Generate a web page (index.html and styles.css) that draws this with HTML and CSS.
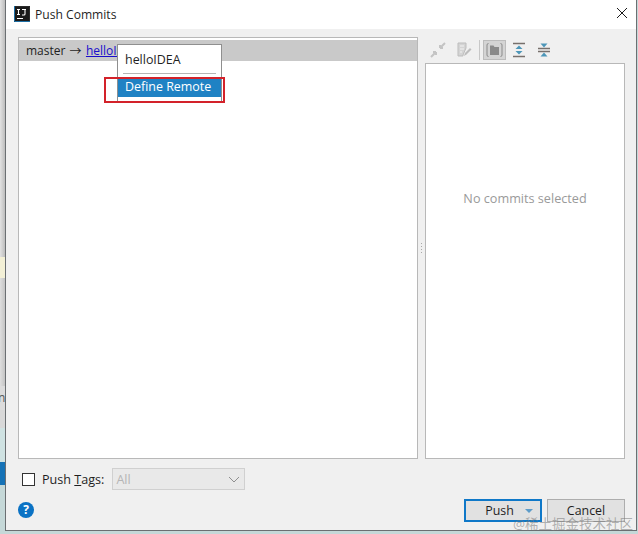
FILE: index.html
```html
<!DOCTYPE html>
<html lang="en">
<head>
<meta charset="utf-8">
<title>Push Commits</title>
<link rel="stylesheet" href="styles.css">
</head>
<body>
<div class="backdrop">
  <div class="strip">
    <div class="seg-gray-a"></div>
    <div class="seg-yellow"></div>
    <div class="seg-gray-b"></div>
    <div class="seg-word">ne</div>
    <div class="seg-gray-c"></div>
    <div class="seg-teal-a"></div>
    <div class="seg-blue"></div>
  </div>
  <div class="dialog">
    <header class="titlebar">
      <svg class="logo" width="16" height="16" viewBox="0 0 16 16"><rect width="16" height="16" fill="#1a1a1a"/><path d="M0 .5h15.500V16" fill="none" stroke="#2b2b2b"/><path d="M.5 0v15.500H16" fill="none" stroke="#1d6fa5"/><path d="M3 3.500h3M4.500 3.500v5M3 8.500h3M8 3.500h4M11 3.500v4.500q0 1-1 1H8" fill="none" stroke="#fff" stroke-width="1.100"/><rect x="3" y="12" width="6" height="1" fill="#fff"/></svg>
      <span class="title">Push Commits</span>
      <svg class="close" width="12" height="12" viewBox="0 0 12 12"><path d="M1 1l10 10M11 1L1 11" stroke="#1a1a1a" stroke-width="1" fill="none"/></svg>
    </header>
    <div class="content">
      <div class="panes">
        <section class="left">
          <div class="branchrow">
            <span class="branch">master</span><span class="arrow">→</span><a class="link">helloIDEA</a>
          </div>
          <div class="popup">
            <div class="popitem first">helloIDEA</div>
            <div class="sep"></div>
            <div class="popitem sel">Define Remote</div>
          </div>
          <div class="redbox"></div>
        </section>
        <div class="splitter"><span class="grip"></span></div>
        <section class="right">
          <div class="toolbar">
            <svg class="tool t1" width="16" height="16" viewBox="0 0 16 16"><path d="M1 15l5-5M6 10H3M6 10v3M15 1l-5 5M10 6h3M10 6V3" stroke="#c4c4c4" stroke-width="2" fill="none"/></svg>
            <svg class="tool t2" width="16" height="16" viewBox="0 0 16 16"><path d="M2 1h8v5l-3 7v1H2z" fill="#d4d4d4" stroke="#bdbdbd"/><path d="M4 4h4M4 7h4M4 10h2" stroke="#f2f2f2"/><path d="M8 14l1-3 5-5 1.500 1.500-5 5z" fill="#bdbdbd"/></svg>
            <span class="tooldiv"></span>
            <span class="toggled"><svg width="17" height="14" viewBox="0 0 17 14"><path d="M2.500 .5Q1 .5 1 2v10q0 1.500 1.500 1.500M14.500 .5Q16 .5 16 2v10q0 1.500-1.500 1.500" fill="none" stroke="#8a8a8a"/><path d="M4 2.500h3.500l1 1.500H13v8H4z" fill="#8a8a8a"/></svg></span>
            <svg class="tool t3" width="14" height="16" viewBox="0 0 14 16"><path d="M1 1.500h12M1 14.500h12" stroke="#77706c" stroke-width="1.500"/><path d="M7 3.500l3.500 3.500h-7zM7 12.500l3.500-3.500h-7z" fill="#4d96b8"/></svg>
            <svg class="tool t4" width="14" height="16" viewBox="0 0 14 16"><path d="M1 6.500h12M1 9.500h12" stroke="#77706c" stroke-width="1.500"/><path d="M7 5.500L3.500 1.500h7zM7 10.500l3.500 4h-7z" fill="#4d96b8"/></svg>
          </div>
          <div class="details">No commits selected</div>
        </section>
      </div>
      <div class="tagsrow">
        <span class="checkbox"></span>
        <span class="taglabel">Push <u>T</u>ags:</span>
        <span class="select"><span>All</span><svg width="12" height="7" viewBox="0 0 12 7"><path d="M1 1l5 5 5-5" fill="none" stroke="#8f8f8f"/></svg></span>
      </div>
      <div class="actions">
        <span class="help">?</span>
        <span class="spacer"></span>
        <button class="btn primary"><span>Push</span><i class="caret"></i></button>
        <button class="btn">Cancel</button>
      </div>
    </div>
  </div>
  <span class="watermark">@稀土掘金技术社区</span>
</div>
</body>
</html>
```

FILE: styles.css
```css
* { box-sizing: border-box; }
html, body { margin: 0; padding: 0; }
body {
  width: 638px;
  height: 534px;
  overflow: hidden;
  font-family: "Open Sans", "Noto Sans", "Noto Sans CJK SC", sans-serif;
  color: #1f1f1f;
}
.backdrop {
  position: relative;
  display: flex;
  width: 638px;
  height: 534px;
  background: #c5d8d8;
}
.strip {
  width: 5px;
  height: 534px;
  flex: none;
  display: flex;
  flex-direction: column;
  overflow: hidden;
}
.seg-gray-a { height: 257px; background: linear-gradient(90deg, #e2e2e2, #bdbdbd); }
.seg-yellow { height: 21px; background: #f3f0d6; }
.seg-gray-b { height: 108px; background: linear-gradient(90deg, #dedede, #c4c4c4); }
.seg-word { height: 24px; background: #dcdcdc; font-size: 12px; line-height: 24px; color: #555; margin-left: -2px; width: 9px; }
.seg-gray-c { height: 18px; background: #d8d8d8; }
.seg-teal-a { height: 34px; background: #cfe2e2; }
.seg-blue { height: 23px; background: #1572b6; }
.dialog {
  width: 632px;
  height: 531px;
  background: #f0f0f0;
  border-left: 1px solid #6b6f72;
  border-bottom: 1px solid #6b6f72;
  border-right: 1px solid #6b6f72;
  display: flex;
  flex-direction: column;
  flex: none;
}
.titlebar {
  height: 29px;
  background: #fff;
  display: flex;
  align-items: center;
  padding: 0 8px;
  flex: none;
}
.logo { margin-top: -1px; }
.title { margin-left: 5px; font-size: 12.1px; margin-top: -1px; }
.close { margin-left: auto; margin-top: -3px; }
.content {
  flex: 1;
  display: flex;
  flex-direction: column;
  padding: 8px 11px 0 12px;
}
.panes { display: flex; height: 422px; }
.left {
  position: relative;
  width: 400px;
  background: #fff;
  border: 1px solid #b8b8b8;
  flex: none;
}
.branchrow {
  height: 21px;
  background: #c9c9c9;
  display: flex;
  align-items: center;
  padding-left: 7px;
  font-size: 12px;
  margin-top: 2px;
}
.arrow { margin: 0 4px; }
.link { color: #1a0dcc; text-decoration: underline; margin-left: 0.5px; }
.popup {
  position: absolute;
  left: 98px;
  top: 6px;
  width: 105px;
  height: 59px;
  background: #fff;
  border: 1px solid #8f8f8f;
  font-size: 12.45px;
}
.popitem { padding-left: 7px; }
.first { height: 28px; line-height: 29px; }
.sep { height: 1px; margin: 0 5px 5px; background: #b5b5b5; }
.sel { background: #1f82c4; color: #fff; height: 18px; line-height: 15px; }
.redbox {
  position: absolute;
  left: 85px;
  top: 39px;
  width: 121px;
  height: 26px;
  border: 2px solid #d3222a;
}
.splitter {
  width: 7px;
  flex: none;
  display: flex;
  align-items: center;
  justify-content: center;
}
.grip {
  width: 3px;
  height: 12px;
  background: radial-gradient(circle, #a8a8a8 0.8px, transparent 1px) 0 0 / 3px 3px;
}
.right { width: 200px; flex: none; display: flex; flex-direction: column; }
.toolbar { height: 26px; display: flex; align-items: center; padding-left: 5px; flex: none; }
.tool { flex: none; }
.t2 { margin-left: 10px; }
.tooldiv { width: 1px; height: 20px; background: #c8c8c8; margin-left: 7px; }
.toggled {
  width: 23px;
  height: 20px;
  background: #d4d4d4;
  border: 1px solid #bcbcbc;
  display: flex;
  align-items: center;
  justify-content: center;
  margin-left: 3px;
}
.t3 { margin-left: 6px; }
.t4 { margin-left: 11px; }
.details {
  flex: 1;
  background: #fff;
  border: 1px solid #b8b8b8;
  display: flex;
  align-items: center;
  justify-content: center;
  font-size: 12.65px;
  color: #9a9a9a;
  padding-bottom: 126px;
}
.tagsrow { display: flex; align-items: center; height: 22px; margin-top: 9px; padding-left: 4px; }
.checkbox { width: 13px; height: 13px; background: #fff; border: 1px solid #333; flex: none; }
.taglabel { margin-left: 7px; font-size: 12.6px; white-space: nowrap; }
.select {
  margin-left: 8px;
  width: 133px;
  height: 22px;
  background: #e9e9e9;
  border: 1px solid #d0d0d0;
  display: flex;
  align-items: center;
  justify-content: space-between;
  padding: 0 4px 0 3px;
  font-size: 12.6px;
  color: #b5b5b5;
}
.actions { display: flex; align-items: center; margin-top: 8px; height: 24px; }
.help {
  width: 16px;
  height: 16px;
  border-radius: 50%;
  background: #0a72c4;
  color: #fff;
  font-size: 12px;
  font-weight: 700;
  text-align: center;
  line-height: 16px;
}
.spacer { flex: 1; }
.btn {
  width: 78px;
  height: 23px;
  background: #e1e1e1;
  border: 1px solid #adadad;
  font: 12.4px "Open Sans", "Noto Sans", sans-serif;
  color: #1f1f1f;
  padding: 0;
  margin-left: 5px;
}
.primary {
  border: 2px solid #0f78c8;
  position: relative;
  padding-right: 7px;
}
.caret {
  position: absolute;
  right: 7px;
  top: 8px;
  width: 0;
  height: 0;
  border-left: 4px solid transparent;
  border-right: 4px solid transparent;
  border-top: 4px solid #5d9cc9;
}
.watermark {
  position: absolute;
  left: 513px;
  top: 513px;
  font-size: 13.5px;
  color: rgba(120, 120, 120, 0.55);
  white-space: nowrap;
}
```
